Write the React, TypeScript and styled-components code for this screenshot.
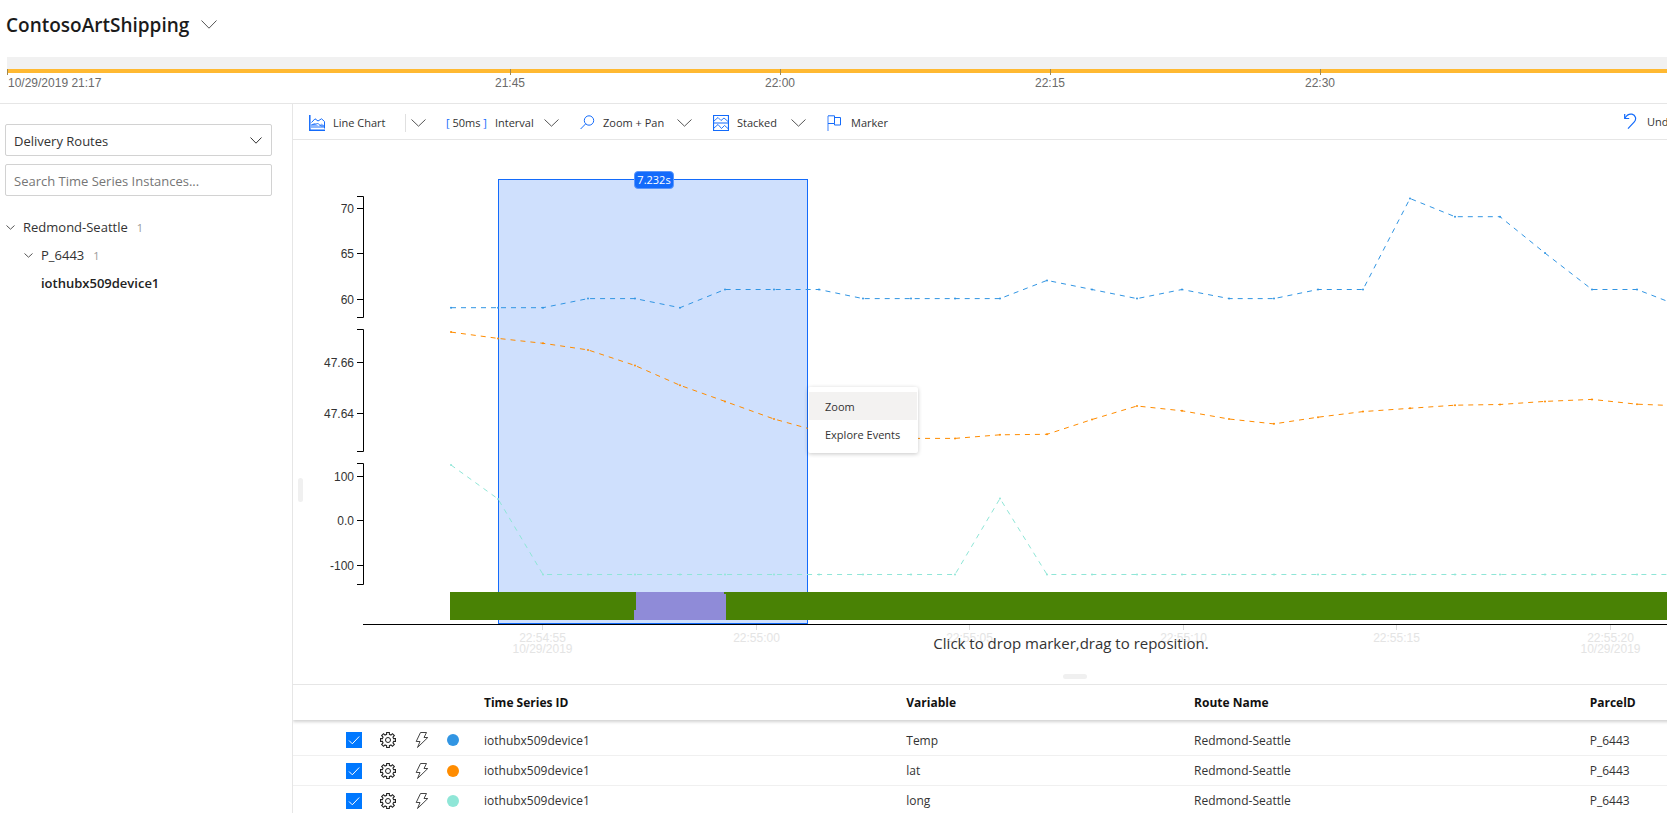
import React from "react";
import styled, { createGlobalStyle } from "styled-components";

const ui = `"Segoe UI", "Open Sans", "Noto Sans", sans-serif`;
const blue = "#136bfb";

const GlobalStyle = createGlobalStyle`
  *, *::before, *::after { box-sizing: border-box; }
  body { margin: 0; background: #fff; color: #333; font-family: ${ui}; font-size: 13px; }
  button, input, select { font: inherit; color: inherit; }
`;

const Page = styled.div`
  display: flex;
  flex-direction: column;
  height: 100vh;
  overflow: hidden;
`;

const Header = styled.header`
  flex: none;
  display: flex;
  align-items: center;
  height: 57px;
  padding: 0 6px 8px;
`;

const Title = styled.h1`
  margin: 0;
  font-size: 19px;
  line-height: 28px;
  font-weight: 600;
  color: #1b1b1b;
`;

const PlainButton = styled.button`
  display: inline-flex;
  align-items: center;
  padding: 0;
  border: 0;
  background: none;
  white-space: nowrap;
  cursor: pointer;
`;

const TitleMenu = styled(PlainButton)`
  margin-left: 12px;
`;

const Scrubber = styled.section`
  flex: none;
  height: 47px;
  padding-left: 7px;
  border-bottom: 1px solid #e6e6e6;
`;

const ScrubberChart = styled.svg`
  display: block;
  width: 100%;
  height: 46px;
  font-family: "Liberation Sans", Arial, sans-serif;
  font-size: 12px;
  fill: #6a6a6a;
`;

const Body = styled.div`
  flex: 1;
  display: flex;
  min-height: 0;
`;

const Sidebar = styled.aside`
  flex: none;
  width: 293px;
  padding: 20px 20px 0 5px;
  border-right: 1px solid #e6e6e6;
`;

const Field = styled.div`
  position: relative;
  height: 32px;
  margin-bottom: 8px;
`;

const fieldBox = `
  width: 100%;
  height: 32px;
  padding: 2px 8px 0;
  border: 1px solid #d2d2d2;
  border-radius: 2px;
  background: #fff;
  outline: none;
`;

const Picker = styled.select`
  ${fieldBox}
  appearance: none;
`;

const Search = styled.input`
  ${fieldBox}
  &::placeholder { color: #767676; opacity: 1; }
`;

const PickerArrow = styled.span`
  position: absolute;
  right: 10px;
  top: 0;
  height: 32px;
  display: flex;
  align-items: center;
  pointer-events: none;
`;

const Tree = styled.ul`
  margin: 17px 0 0;
  padding: 0;
  list-style: none;
`;

const TreeRow = styled.li<{ $level: number; $leaf?: boolean }>`
  display: flex;
  align-items: center;
  height: 28px;
  padding-left: ${(p) => p.$level * 18 + (p.$leaf ? 0 : 1)}px;
  color: ${(p) => (p.$leaf ? "#222" : "#333")};
  font-weight: ${(p) => (p.$leaf ? 600 : 400)};
`;

const TreeToggle = styled(PlainButton)`
  gap: 8px;
`;

const Count = styled.span`
  margin-left: 9px;
  font-size: 11px;
  color: #999;
`;

const Main = styled.main`
  flex: 1;
  min-width: 0;
  overflow: hidden;
`;

/* The workspace runs past the right edge of the window and is clipped there. */
const Workspace = styled.div`
  width: calc(100% + 190px);
`;

const Toolbar = styled.div`
  display: flex;
  align-items: center;
  gap: 21px;
  height: 36px;
  padding: 2px 0 0 16px;
  border-bottom: 1px solid #e6e6e6;
  font-size: 11px;
`;

const Tool = styled(PlainButton)<{ $width?: number }>`
  flex: none;
  gap: 8px;
  width: ${(p) => (p.$width ? `${p.$width}px` : "auto")};
  height: 18px;
  & > svg:last-child:not(:first-child) { margin-left: auto; }
`;

const SplitTool = styled.div`
  flex: none;
  display: flex;
  width: 116px;
`;

const SplitArrow = styled(PlainButton)`
  height: 18px;
  padding-left: 5px;
  border-left: 1px solid #e0e0e0;
`;

const Bracket = styled.span`
  color: ${blue};
`;

const ToolbarEnd = styled.div`
  flex: none;
  width: 233px;
  margin-left: auto;
`;

const ChartArea = styled.section`
  position: relative;
  height: 544px;
`;

const ChartSvg = styled.svg`
  display: block;
  width: 100%;
  height: 520px;
  font-family: "Liberation Sans", Arial, sans-serif;
  font-size: 12px;
`;

const RangeBadge = styled.div`
  position: absolute;
  left: 341px;
  top: 31px;
  width: 40px;
  height: 18px;
  border: 1px solid #5b97fc;
  border-radius: 4px;
  background: ${blue};
  color: #fff;
  font-size: 11px;
  line-height: 16px;
  text-align: center;
`;

const ContextMenu = styled.div`
  position: absolute;
  left: 515px;
  top: 247px;
  width: 110px;
  padding: 5px 1px;
  border-radius: 2px;
  background: #fff;
  box-shadow: 0 1px 4px rgba(0, 0, 0, 0.22);
  font-size: 11px;
`;

const MenuItem = styled.button<{ $active?: boolean }>`
  display: block;
  width: 100%;
  height: 28px;
  padding: 0 16px;
  border: 0;
  background: ${(p) => (p.$active ? "#f3f2f1" : "#fff")};
  text-align: left;
  white-space: nowrap;
`;

const Hint = styled.p`
  position: absolute;
  left: 0;
  right: 0;
  top: 493px;
  margin: 0 8px 0 0;
  font-size: 15px;
  line-height: 20px;
  text-align: center;
`;

const Handle = styled.div<{ $vertical?: boolean }>`
  position: absolute;
  width: ${(p) => (p.$vertical ? 5 : 24)}px;
  height: ${(p) => (p.$vertical ? 24 : 5)}px;
  left: ${(p) => (p.$vertical ? "5px" : "calc(50% - 12px)")};
  top: ${(p) => (p.$vertical ? 338 : 534)}px;
  border-radius: 3px;
  background: #f0f0f0;
`;

const SeriesTable = styled.table`
  width: 100%;
  table-layout: fixed;
  border-collapse: collapse;
  border-top: 1px solid #e6e6e6;
  font-size: 12px;

  th, td { padding: 0; text-align: left; white-space: nowrap; }
  th { height: 35px; color: #111; font-weight: 700; }
  thead { box-shadow: 0 2px 3px rgba(0, 0, 0, 0.18); }
  tbody::before { content: ""; display: block; height: 6px; }
  td { height: 30px; border-bottom: 1px solid #f0f0f0; }
`;

const Col = styled.col<{ $width: string }>`
  width: ${(p) => p.$width};
`;

const Controls = styled.div`
  display: flex;
  align-items: center;
  padding-left: 53px;
`;

const Tick = styled.label`
  display: grid;
  width: 16px;
  height: 16px;
  margin-right: 18px;
  & > * { grid-area: 1 / 1; }
  & > svg { pointer-events: none; }
`;

const TickBox = styled.input`
  appearance: none;
  width: 16px;
  height: 16px;
  margin: 0;
  background: #0078ff;
`;

const BoltButton = styled(PlainButton)`
  margin: 0 18px 0 19px;
`;

const Dot = styled.span<{ $color: string }>`
  width: 12px;
  height: 12px;
  border-radius: 50%;
  background: ${(p) => p.$color};
`;

const Chevron = ({ w = 15, h = 8, color = "#555" }: { w?: number; h?: number; color?: string }) => (
  <svg width={w} height={h} viewBox={`0 0 ${w} ${h}`} fill="none" stroke={color} aria-hidden="true">
    <path d={`M.5 .5L${w / 2} ${h - 0.8}L${w - 0.5} .5`} />
  </svg>
);

const LineChartIcon = () => (
  <svg width="16" height="16" viewBox="0 0 16 16" fill="none" stroke={blue} aria-hidden="true">
    <path d="M2 13V9.500L5.500 8L9.500 11L12.500 8.500L15.500 10.500V13Z" fill="#8db7fd" stroke="none" />
    <path d="M2.500 7.500L6 3.800L9 6L12.500 3.800L15.500 6.500V13.500" />
    <path d="M2.500 9.800L9 8.500L12 11L15.500 11" strokeWidth=".8" />
    <path d="M.8 0V15.200H16" strokeWidth="1.500" />
  </svg>
);

const SearchIcon = () => (
  <svg width="15" height="15" viewBox="0 0 15 15" fill="none" stroke={blue} aria-hidden="true">
    <circle cx="9" cy="5.500" r="4.700" />
    <path d="M5.700 8.800L.6 14" />
  </svg>
);

const StackedIcon = () => (
  <svg width="16" height="16" viewBox="0 0 16 16" fill="none" stroke={blue} aria-hidden="true">
    <path d="M.5 .5H15.500V15.500H.5ZM.5 8H15.500" strokeWidth="1.200" />
    <path d="M1 6L5 2.500L8 5.500L11 3L15 6.500M1 13L5 9.500L8.500 13.500L11.500 10.500L15 13.500" strokeWidth=".9" />
  </svg>
);

const FlagIcon = () => (
  <svg width="16" height="16" viewBox="0 0 16 16" fill="none" stroke={blue} aria-hidden="true">
    <path d="M1 1V16" stroke="#7fadfd" strokeWidth="1.500" />
    <path d="M1 .8H7.500V8.500H1M7.500 2.500H13.500V10H7.500V8.500" />
  </svg>
);

const UndoIcon = () => (
  <svg width="15" height="17" viewBox="0 0 15 17" fill="none" stroke={blue} aria-hidden="true">
    <path d="M.7 1V5.500H5.200" strokeWidth="1.200" />
    <path d="M1 5C3 1.500 6 .8 8 1.200C11.500 2 12.800 6 10.300 8.800L4 15.700" strokeWidth="1.200" />
  </svg>
);

const GearIcon = () => {
  const teeth = Array.from({ length: 8 }, (_, i) => {
    const at = (r: number, deg: number) => {
      const a = ((i * 45 + deg - 90) * Math.PI) / 180;
      return `${(8 + r * Math.cos(a)).toFixed(2)} ${(8 + r * Math.sin(a)).toFixed(2)}`;
    };
    return `${i ? "L" : "M"}${at(5.8, -14)}L${at(7.7, -10)}L${at(7.7, 10)}L${at(5.8, 14)}`;
  }).join("");
  return (
    <svg width="16" height="16" viewBox="0 0 16 16" fill="none" stroke="#222" aria-hidden="true">
      <path d={`${teeth}Z`} strokeWidth="1.100" />
      <circle cx="8" cy="8" r="2.500" />
    </svg>
  );
};

const BoltIcon = () => (
  <svg width="14" height="16" viewBox="0 0 14 16" fill="none" stroke="#444" aria-hidden="true">
    <path d="M5.500 .5H11.500L9 5.500H12.800L2.500 15.500L5 9.500H1.200Z" />
  </svg>
);

const CheckMark = () => (
  <svg width="16" height="16" viewBox="0 0 16 16" fill="none" stroke="#fff" aria-hidden="true">
    <path d="M3 8.500L6.300 11.800L13.200 4.500" />
  </svg>
);

const hours = [
  { x: 503, label: "21:45" },
  { x: 773, label: "22:00" },
  { x: 1043, label: "22:15" },
  { x: 1313, label: "22:30" },
];

const Availability = () => (
  <ScrubberChart role="img" aria-label="Availability">
    <rect width="100%" height="12" fill="#f1f1f1" />
    <rect y="12" width="100%" height="4" fill="#ffb932" />
    <path d="M.5 12V18" stroke="#a08850" />
    <text x="1" y="30">10/29/2019 21:17</text>
    {hours.map((h) => (
      <g key={h.label}>
        <path d={`M${h.x + 0.5} 12V18`} stroke="#a08850" />
        <text x={h.x} y="30" textAnchor="middle">{h.label}</text>
      </g>
    ))}
  </ScrubberChart>
);

const sampleX = [
  158, 205, 250, 295, 342, 387, 432, 481, 526, 570, 618, 662, 707, 754, 799, 844, 889, 936, 981,
  1025, 1070, 1117, 1162, 1207, 1252, 1299, 1344, 1391,
];

interface Band {
  color: string;
  top: number;
  bottom: number;
  ticks: { value: number; label: string }[];
  y: (v: number) => number;
  values: number[];
}

const bands: Band[] = [
  {
    color: "#3195e3",
    top: 56.5,
    bottom: 177.5,
    ticks: [{ value: 70, label: "70" }, { value: 65, label: "65" }, { value: 60, label: "60" }],
    y: (v) => 58.5 + (71 - v) * 9.1,
    values: [
      59, 59, 59, 60, 60, 59, 61, 61, 61, 60, 60, 60, 60, 62, 61, 60, 61, 60, 60, 61, 61, 71, 69,
      69, 65, 61, 61, 59,
    ],
  },
  {
    color: "#ff8c00",
    top: 189.5,
    bottom: 311.5,
    ticks: [{ value: 47.66, label: "47.66" }, { value: 47.64, label: "47.64" }],
    y: (v) => 222.4 + (47.66 - v) * 2550,
    values: [
      47.6719, 47.6694, 47.6675, 47.6649, 47.6588, 47.651, 47.6447, 47.6378, 47.6329, 47.6302,
      47.6302, 47.6302, 47.6316, 47.6318, 47.6376, 47.6429, 47.641, 47.6378, 47.6359, 47.6385,
      47.6407, 47.642, 47.6432, 47.6435, 47.6447, 47.6455, 47.6436, 47.6429,
    ],
  },
  {
    color: "#8fe6d7",
    top: 323.5,
    bottom: 444.5,
    ticks: [{ value: 100, label: "100" }, { value: 0, label: "0.0" }, { value: -100, label: "-100" }],
    y: (v) => 380.4 - v * 0.447,
    values: sampleX.map((_, i) => (i === 0 ? 124 : i === 1 ? 48 : i === 12 ? 49 : -121)),
  },
];

const timeTicks = [
  { x: 249.5, label: "22:54:55", date: "10/29/2019" },
  { x: 463.5, label: "22:55:00" },
  { x: 676.5, label: "22:55:05" },
  { x: 890.5, label: "22:55:10" },
  { x: 1103.5, label: "22:55:15" },
  { x: 1317.5, label: "22:55:20", date: "10/29/2019" },
];

const BandPlot = ({ band }: { band: Band }) => (
  <g>
    <path d={`M64 ${band.top}H70.5V${band.bottom}H64`} fill="none" stroke="#000" />
    {band.ticks.map((t) => {
      const y = Math.round(band.y(t.value)) + 0.5;
      return (
        <g key={t.label}>
          <path d={`M64 ${y}H70`} stroke="#000" />
          <text x="61" y={y + 4} textAnchor="end" fill="#333">{t.label}</text>
        </g>
      );
    })}
    <polyline
      points={band.values.map((v, i) => `${sampleX[i]},${band.y(v).toFixed(1)}`).join(" ")}
      fill="none"
      stroke={band.color}
      strokeDasharray="5 5"
    />
    {band.values.map((v, i) => (
      <circle key={i} cx={sampleX[i]} cy={band.y(v)} r="1" fill={band.color} />
    ))}
  </g>
);

const Chart = () => (
  <ChartSvg role="img" aria-label="Stacked line chart of Temp, lat and long">
    <rect x="205.5" y="39.5" width="309" height="444" fill="#cfe0fd" stroke={blue} />
    {bands.map((b) => <BandPlot key={b.color} band={b} />)}
    <rect x="157" y="452" width="100%" height="28" fill="#498205" />
    <path d="M343 452H431V454H433V480H341V470H343Z" fill="#8f8bd8" />
    <rect x="70" y="484" width="100%" height="1" fill="#000" />
    {timeTicks.map((t) => (
      <g key={t.label} fill="#e4e4e4">
        <path d={`M${t.x} 485V490`} stroke="#dcdcdc" />
        <text x={t.x} y="502" textAnchor="middle">{t.label}</text>
        {t.date && <text x={t.x} y="513" textAnchor="middle">{t.date}</text>}
      </g>
    ))}
  </ChartSvg>
);

const rows = [
  { variable: "Temp", color: "#3195e3" },
  { variable: "lat", color: "#ff8c00" },
  { variable: "long", color: "#8fe6d7" },
];

export default function App() {
  return (
    <Page>
      <GlobalStyle />
      <Header>
        <Title>ContosoArtShipping</Title>
        <TitleMenu aria-label="Switch environment"><Chevron w={16} h={9} /></TitleMenu>
      </Header>
      <Scrubber><Availability /></Scrubber>
      <Body>
        <Sidebar>
          <Field>
            <Picker aria-label="Hierarchy" defaultValue="routes">
              <option value="routes">Delivery Routes</option>
            </Picker>
            <PickerArrow><Chevron w={12} h={7} color="#333" /></PickerArrow>
          </Field>
          <Field>
            <Search type="text" aria-label="Search Time Series Instances" placeholder="Search Time Series Instances..." />
          </Field>
          <Tree>
            <TreeRow $level={0}>
              <TreeToggle><Chevron w={9} h={5} />Redmond-Seattle</TreeToggle>
              <Count>1</Count>
            </TreeRow>
            <TreeRow $level={1}>
              <TreeToggle><Chevron w={9} h={5} />P_6443</TreeToggle>
              <Count>1</Count>
            </TreeRow>
            <TreeRow $level={2} $leaf>iothubx509device1</TreeRow>
          </Tree>
        </Sidebar>
        <Main>
          <Workspace>
            <Toolbar>
              <SplitTool>
                <Tool $width={96}><LineChartIcon /><span>Line Chart</span></Tool>
                <SplitArrow aria-label="Chart types"><Chevron /></SplitArrow>
              </SplitTool>
              <Tool $width={113}>
                <span><Bracket>[</Bracket> 50ms <Bracket>]</Bracket></span>
                <span>Interval</span>
                <Chevron />
              </Tool>
              <Tool $width={112}><SearchIcon /><span>Zoom + Pan</span><Chevron /></Tool>
              <Tool $width={93}><StackedIcon /><span>Stacked</span><Chevron /></Tool>
              <Tool><FlagIcon /><span>Marker</span></Tool>
              <ToolbarEnd><Tool><UndoIcon /><span>Undo</span></Tool></ToolbarEnd>
            </Toolbar>
            <ChartArea>
              <Chart />
              <RangeBadge>7.232s</RangeBadge>
              <ContextMenu role="menu">
                <MenuItem role="menuitem" $active>Zoom</MenuItem>
                <MenuItem role="menuitem">Explore Events</MenuItem>
              </ContextMenu>
              <Hint>Click to drop marker,drag to reposition.</Hint>
              <Handle $vertical />
              <Handle />
            </ChartArea>
            <SeriesTable>
              <colgroup>
                <Col $width="191px" />
                <Col $width="27%" />
                <Col $width="18.4%" />
                <Col $width="25.3%" />
                <Col $width="auto" />
              </colgroup>
              <thead>
                <tr>
                  <th aria-label="Controls" />
                  <th>Time Series ID</th>
                  <th>Variable</th>
                  <th>Route Name</th>
                  <th>ParcelD</th>
                </tr>
              </thead>
              <tbody>
                {rows.map((r) => (
                  <tr key={r.variable}>
                    <td>
                      <Controls>
                        <Tick>
                          <TickBox type="checkbox" defaultChecked aria-label={`Show ${r.variable}`} />
                          <CheckMark />
                        </Tick>
                        <PlainButton aria-label="Settings"><GearIcon /></PlainButton>
                        <BoltButton aria-label="Events"><BoltIcon /></BoltButton>
                        <Dot $color={r.color} />
                      </Controls>
                    </td>
                    <td>iothubx509device1</td>
                    <td>{r.variable}</td>
                    <td>Redmond-Seattle</td>
                    <td>P_6443</td>
                  </tr>
                ))}
              </tbody>
            </SeriesTable>
          </Workspace>
        </Main>
      </Body>
    </Page>
  );
}
